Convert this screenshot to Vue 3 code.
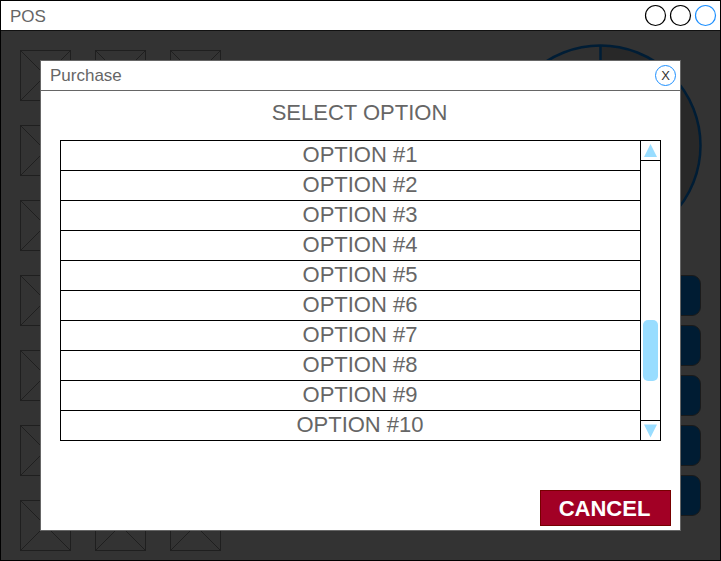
<script setup>
const tiles = Array.from({ length: 21 }, (_, i) => i)
const options = Array.from({ length: 10 }, (_, i) => `OPTION #${i + 1}`)
const actions = [1, 2, 3, 4, 5]
</script>

<template>
  <main class="window">
    <header class="titlebar">
      <span class="title">POS</span>
      <svg class="controls" width="75" height="30" viewBox="0 0 75 30" fill="none" stroke-width="1.2">
        <circle cx="11.5" cy="15.5" r="10" stroke="#000" />
        <circle cx="36.5" cy="15.5" r="10" stroke="#000" />
        <circle cx="61.5" cy="15.5" r="10" stroke="#1e90ff" />
      </svg>
    </header>
    <section class="workspace">
      <div class="tiles">
        <svg v-for="t in tiles" :key="t" width="51" height="51" viewBox="0 0 51 51" fill="none" stroke="#1f1f1f">
          <rect x=".5" y=".5" width="50" height="50" />
          <path d="M.5 .5 50.5 50.5M.5 50.5 50.5 .5" />
        </svg>
      </div>
      <div class="side">
        <svg class="pie" width="204" height="204" viewBox="0 0 204 204">
          <circle cx="102.5" cy="102.5" r="100" fill="#282828" />
          <path d="M102.5 102.5V2.5A100 100 0 0 0 16 152.5Z" fill="#303030" />
          <path d="M102.5 102.5V2.5" stroke="#001d35" stroke-width="2.5" />
          <circle cx="102.5" cy="102.5" r="100" fill="none" stroke="#001d35" stroke-width="2.5" />
        </svg>
        <div class="actions">
          <div v-for="a in actions" :key="a" class="action"></div>
        </div>
      </div>
    </section>

    <section class="dialog" role="dialog">
      <header class="dialog-head">
        <span class="dialog-title">Purchase</span>
        <button class="close">X</button>
      </header>
      <h1>SELECT OPTION</h1>
      <div class="picker">
        <ul>
          <li v-for="o in options" :key="o">{{ o }}</li>
        </ul>
        <div class="scroll">
          <div class="arrow">
            <svg width="19" height="19" viewBox="0 0 19 19"><path d="M9.5 3 16 16H3Z" fill="#99ddff" /></svg>
          </div>
          <div class="track"><div class="thumb"></div></div>
          <div class="arrow down">
            <svg width="19" height="19" viewBox="0 0 19 19"><path d="M9.5 16.5 16 3.5H3Z" fill="#99ddff" /></svg>
          </div>
        </div>
      </div>
      <button class="cancel">CANCEL</button>
    </section>
  </main>
</template>

<style>
body { margin: 0; overflow: hidden; }
</style>

<style scoped>
* { box-sizing: border-box; }
.window {
  position: relative;
  display: flex;
  flex-direction: column;
  width: 721px;
  height: 561px;
  border: 1px solid #000;
  background: #333;
  color: #666;
  font-family: "Liberation Sans", Arial, sans-serif;
}
.titlebar {
  display: flex;
  justify-content: space-between;
  height: 30px;
  flex: none;
  background: #fff;
  border-bottom: 1px solid #111;
}
.title { padding-left: 9px; font-size: 17px; line-height: 31px; }
.controls { margin-top: -1px; flex: none; margin-right: 1px; }
.workspace {
  display: flex;
  justify-content: space-between;
  flex: 1;
  min-height: 0;
  padding: 19px 18px 0 19px;
}
.tiles {
  display: grid;
  grid-template-columns: repeat(3, 51px);
  grid-auto-rows: 51px;
  gap: 24px;
}
.tiles svg { display: block; }
.side { width: 204px; margin-top: -7px; }
.pie { display: block; overflow: visible; }
.actions { display: grid; gap: 9px; padding: 28px 1px 0 1px; }
.action {
  height: 41px;
  border: 1px solid #1b1b1b;
  border-radius: 9px;
  background: #001c33;
}
.dialog {
  position: absolute;
  left: 39px;
  top: 59px;
  width: 641px;
  height: 471px;
  display: flex;
  flex-direction: column;
  border: 1px solid #666;
  background: #fff;
}
.dialog-head {
  display: flex;
  justify-content: space-between;
  height: 30px;
  flex: none;
  border-bottom: 1px solid #666;
}
.dialog-title { padding-left: 9px; font-size: 17px; line-height: 29px; }
.close {
  width: 21px;
  height: 21px;
  margin: 4px 4px 0 0;
  padding: 0;
  border: 1px solid #1e90ff;
  border-radius: 50%;
  background: none;
  color: #333;
  font: 13px/20px "Liberation Sans", Arial, sans-serif;
}
h1 {
  margin: 0;
  height: 49px;
  padding-right: 2px;
  font-size: 22px;
  font-weight: 400;
  line-height: 43px;
  text-align: center;
}
.picker { display: flex; flex: none; margin: 0 19px; height: 301px; border: 1px solid #000; }
ul { flex: 1; margin: 0; padding: 0; list-style: none; }
li {
  height: 30px;
  padding-left: 19px;
  border-bottom: 1px solid #000;
  font-size: 22px;
  line-height: 28px;
  text-align: center;
}
li:last-child { border-bottom: 0; }
.scroll { display: flex; flex-direction: column; width: 20px; border-left: 1px solid #000; }
.arrow { height: 20px; border-bottom: 1px solid #000; }
.arrow svg { display: block; }
.down { border-top: 1px solid #000; border-bottom: 0; }
.track { flex: 1; display: flex; flex-direction: column; justify-content: flex-end; padding: 0 2px 39px; }
.thumb { height: 61px; border-radius: 5px; background: #99ddff; }
.cancel {
  align-self: flex-end;
  width: 131px;
  height: 36px;
  margin: 49px 9px 0 0;
  padding: 1px 2px 0 0;
  border: 1px solid #700;
  background: #a20025;
  color: #fff;
  font: bold 22px/33px "Liberation Sans", Arial, sans-serif;
}
</style>
